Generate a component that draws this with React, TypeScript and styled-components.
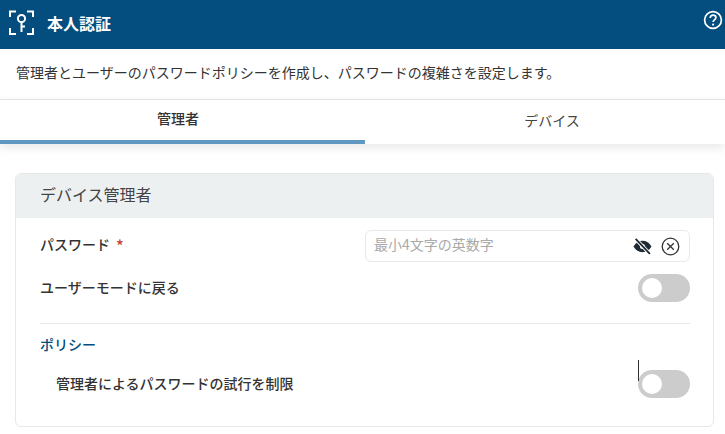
import React from "react";
import styled, { createGlobalStyle } from "styled-components";

const GlobalStyle = createGlobalStyle`
  html, body {
    margin: 0;
    padding: 0;
    background: #fff;
    font-family: "Noto Sans CJK JP", "Noto Sans", sans-serif;
  }
`;

const App = () => {
  return (
    <>
      <GlobalStyle />
      <Page>
        <Header>
          <HeaderLeft>
            <svg width="28" height="28" viewBox="0 0 28 28" fill="none" stroke="#fff" strokeWidth="2">
              <path d="M2 8V2.5H8M19 2.5H25V8M2 19V25H8M19 25H25V19" />
              <circle cx="13.5" cy="9.5" r="3.6" />
              <path d="M13.5 13V23M13.5 17.5H17" />
            </svg>
            <HeaderTitle>本人認証</HeaderTitle>
          </HeaderLeft>
          <HelpIcon>
            <svg width="20" height="20" viewBox="0 0 20 20" fill="none">
              <circle cx="10" cy="10" r="8.4" stroke="#fff" strokeWidth="1.7" />
              <path d="M7.2 8c0-1.7 1.2-2.8 2.9-2.8 1.6 0 2.8 1 2.8 2.4 0 2.2-2.8 2.2-2.8 4.4" stroke="#fff" strokeWidth="1.7" />
              <circle cx="10.1" cy="14.6" r="1.1" fill="#fff" />
            </svg>
          </HelpIcon>
        </Header>
        <Description>管理者とユーザーのパスワードポリシーを作成し、パスワードの複雑さを設定します。</Description>
        <Tabs>
          <AdminTab>管理者</AdminTab>
          <DeviceTab>デバイス</DeviceTab>
        </Tabs>
        <Content>
          <Card>
            <CardHeader>デバイス管理者</CardHeader>
            <CardBody>
              <PasswordRow>
                <PasswordLabel>
                  パスワード<Required>*</Required>
                </PasswordLabel>
                <InputBox>
                  <Placeholder>最小4文字の英数字</Placeholder>
                  <svg width="19" height="17" viewBox="0 0 18 16">
                    <path d="M0.5 8C2.5 4.4 5.5 2.6 9 2.6s6.5 1.8 8.5 5.4c-2 3.6-5 5.4-8.5 5.4S2.5 11.6 0.5 8z" fill="#1f2a33" />
                    <circle cx="9" cy="8" r="2.4" fill="#fff" />
                    <path d="M2.5 0.8L16 15" stroke="#fff" strokeWidth="3.4" />
                    <path d="M2.5 0.8L16 15" stroke="#1f2a33" strokeWidth="1.7" />
                  </svg>
                  <ClearIcon>
                    <svg width="19" height="19" viewBox="0 0 19 19" fill="none" stroke="#333" strokeWidth="1.3">
                      <circle cx="9.5" cy="9.5" r="8.3" />
                      <path d="M6.2 6.2L12.8 12.8M12.8 6.2L6.2 12.8" />
                    </svg>
                  </ClearIcon>
                </InputBox>
              </PasswordRow>
              <ToggleRow>
                <RowLabel>ユーザーモードに戻る</RowLabel>
                <Toggle />
              </ToggleRow>
              <Divider />
              <SectionTitle>ポリシー</SectionTitle>
              <PolicyRow>
                <RowLabel>管理者によるパスワードの試行を制限</RowLabel>
                <ToggleSlot>
                  <Caret />
                  <Toggle />
                </ToggleSlot>
              </PolicyRow>
            </CardBody>
          </Card>
        </Content>
      </Page>
    </>
  );
};
export default App;

const Page = styled.div`
  width: 725px;
  height: 434px;
  overflow: hidden;
  color: #333;
`;

const Header = styled.header`
  height: 49px;
  background: #034e7e;
  display: flex;
  align-items: flex-start;
  justify-content: space-between;
  padding: 0 2px 0 8px;
  box-sizing: border-box;
`;

const HeaderLeft = styled.div`
  height: 45px;
  display: flex;
  align-items: center;
  gap: 11px;
`;

const HeaderTitle = styled.h1`
  margin: 0;
  font-size: 16px;
  font-weight: 700;
  color: #fff;
`;

const HelpIcon = styled.div`
  display: flex;
  padding-top: 10px;
`;

const Description = styled.p`
  margin: 0;
  height: 51px;
  box-sizing: border-box;
  border-bottom: 1px solid #e8e8e8;
  padding: 0 0 5px 16px;
  display: flex;
  align-items: center;
  font-size: 14px;
  color: #333;
`;

const Tabs = styled.nav`
  display: flex;
  height: 44px;
  box-shadow: 0 3px 10px rgba(0, 0, 0, 0.1);
  position: relative;
`;

const AdminTab = styled.div`
  width: 365px;
  display: flex;
  align-items: center;
  justify-content: center;
  box-sizing: border-box;
  padding: 0 9px 4px 0;
  font-size: 14px;
  font-weight: 500;
  color: #333;
  border-bottom: 4px solid #6098c2;
`;

const DeviceTab = styled.div`
  flex: 1;
  display: flex;
  align-items: center;
  justify-content: center;
  box-sizing: border-box;
  padding: 0 0 4px 14px;
  font-size: 14px;
  color: #444;
`;

const Content = styled.main`
  padding: 29px 11px 0 15px;
`;

const Card = styled.section`
  height: 254px;
  box-sizing: border-box;
  border: 1px solid #e8e8e8;
  border-radius: 6px;
  overflow: hidden;
`;

const CardHeader = styled.div`
  height: 44px;
  background: #edf0f1;
  display: flex;
  align-items: center;
  padding: 0 0 4px 24px;
  box-sizing: border-box;
  font-size: 16px;
  color: #444;
`;

const CardBody = styled.div`
  padding: 12px 23px 0 24px;
`;

const PasswordRow = styled.div`
  display: flex;
  align-items: center;
  justify-content: space-between;
  height: 32px;
`;

const RowLabel = styled.span`
  font-size: 14px;
  font-weight: 500;
  line-height: 20px;
  margin-top: -3px;
  color: #333;
`;

const PasswordLabel = styled(RowLabel)`
  margin-top: -5px;
`;

const Required = styled.span`
  color: #c9453c;
  margin-left: 6px;
  font-size: 16px;
  position: relative;
  top: 2px;
`;

const InputBox = styled.div`
  width: 325px;
  height: 32px;
  box-sizing: border-box;
  border: 1px solid #e8e8e8;
  border-radius: 6px;
  display: flex;
  align-items: center;
  padding: 0 9px 0 8px;
`;

const Placeholder = styled.span`
  flex: 1;
  font-size: 14px;
  line-height: 20px;
  margin-top: -5px;
  color: #a9a9a9;
`;

const ClearIcon = styled.span`
  display: flex;
  margin-left: 9px;
`;

const ToggleRow = styled.div`
  display: flex;
  align-items: center;
  justify-content: space-between;
  height: 28px;
  margin-top: 12px;
`;

const Toggle = styled.div`
  width: 52px;
  height: 28px;
  border-radius: 14px;
  background: #ccc;
  display: flex;
  align-items: center;
  padding-left: 4px;
  box-sizing: border-box;

  &::before {
    content: "";
    width: 20px;
    height: 20px;
    border-radius: 50%;
    background: #fff;
  }
`;

const Divider = styled.hr`
  margin: 21px 0 0;
  border: none;
  border-top: 1px solid #e8e8e8;
`;

const SectionTitle = styled.div`
  margin-top: 8px;
  line-height: 24px;
  font-size: 14px;
  font-weight: 500;
  color: #034e7e;
`;

const PolicyRow = styled.div`
  display: flex;
  align-items: center;
  justify-content: space-between;
  height: 28px;
  margin-top: 14px;
  padding-left: 16px;
`;

const ToggleSlot = styled.div`
  position: relative;
`;

const Caret = styled.span`
  position: absolute;
  left: 0;
  top: -10px;
  width: 1px;
  height: 21px;
  background: #333;
`;
